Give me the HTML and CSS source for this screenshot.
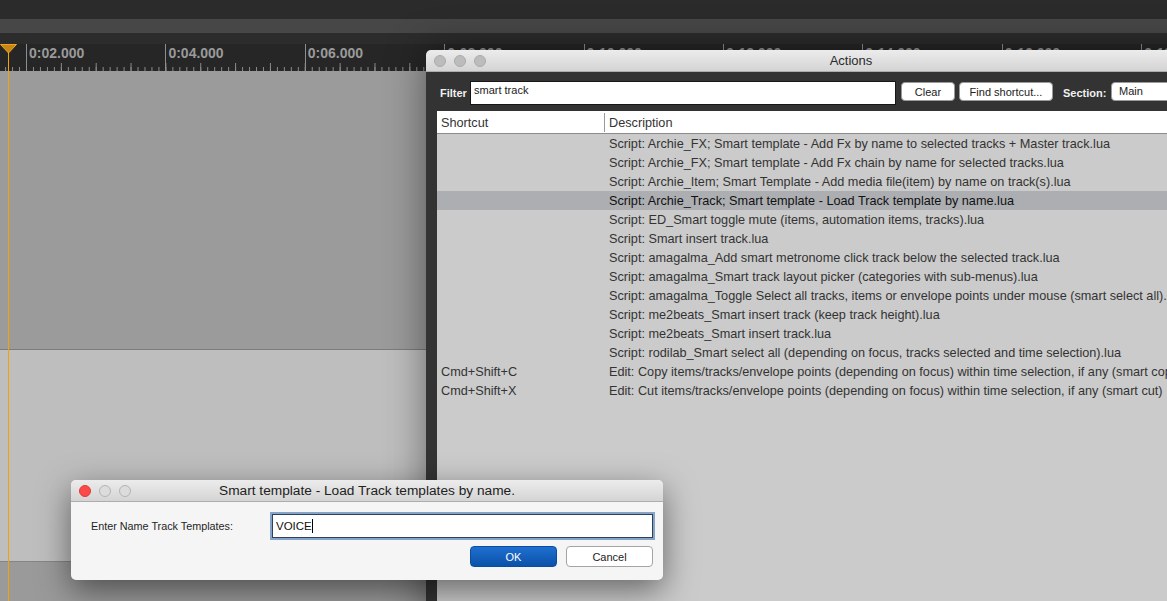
FILE: index.html
```html
<!DOCTYPE html>
<html lang="en">
<head>
<meta charset="UTF-8">
<title>Actions</title>
<link rel="stylesheet" href="styles.css">
</head>
<body>
<div class="app">
    <div class="menubar"></div>
    <div class="toolbar"></div>
    <div class="gap"></div>

    <div class="ruler">
        <div class="ruler-cell"><span>0:02.000</span></div>
        <div class="ruler-cell"><span>0:04.000</span></div>
        <div class="ruler-cell"><span>0:06.000</span></div>
        <div class="ruler-cell"><span>0:08.000</span></div>
        <div class="ruler-cell"><span>0:10.000</span></div>
        <div class="ruler-cell"><span>0:12.000</span></div>
        <div class="ruler-cell"><span>0:14.000</span></div>
        <div class="ruler-cell"><span>0:16.000</span></div>
        <div class="ruler-cell"><span>0:18.000</span></div>
    </div>

    <div class="track track-a"></div>
    <div class="track track-b"></div>
    <div class="track track-c"></div>

    <!-- playhead -->
    <div class="playhead">
        <svg width="17" height="10" viewBox="0 0 17 10">
            <polygon points="0.5,0.5 16.5,0.5 8.5,9" fill="#c6861a" stroke="#f2a41c" stroke-width="1"/>
        </svg>
        <div class="playhead-line"></div>
    </div>

    <!-- actions window -->
    <section class="win actions">
        <div class="titlebar">
            <div class="lights">
                <span class="light"></span><span class="light"></span><span class="light"></span>
            </div>
            <div class="title">Actions</div>
            <div></div>
        </div>
        <div class="actions-body">
            <div class="filter-row">
                <label class="filter-label">Filter</label>
                <div class="filter-input">smart track</div>
                <button class="btn btn-clear">Clear</button>
                <button class="btn btn-find">Find shortcut...</button>
                <span class="section-label">Section:</span>
                <div class="select">Main</div>
            </div>

            <div class="list">
                <div class="list-head">
                    <div class="col-short">Shortcut</div>
                    <div class="col-desc">Description</div>
                </div>
                <div class="row"><div class="col-short"></div><div class="col-desc">Script: Archie_FX; Smart template - Add Fx by name to selected tracks + Master track.lua</div></div>
                <div class="row"><div class="col-short"></div><div class="col-desc">Script: Archie_FX; Smart template - Add Fx chain by name for selected tracks.lua</div></div>
                <div class="row"><div class="col-short"></div><div class="col-desc">Script: Archie_Item; Smart Template - Add media file(item) by name on track(s).lua</div></div>
                <div class="row selected"><div class="col-short"></div><div class="col-desc">Script: Archie_Track; Smart template - Load Track template by name.lua</div></div>
                <div class="row"><div class="col-short"></div><div class="col-desc">Script: ED_Smart toggle mute (items, automation items, tracks).lua</div></div>
                <div class="row"><div class="col-short"></div><div class="col-desc">Script: Smart insert track.lua</div></div>
                <div class="row"><div class="col-short"></div><div class="col-desc">Script: amagalma_Add smart metronome click track below the selected track.lua</div></div>
                <div class="row"><div class="col-short"></div><div class="col-desc">Script: amagalma_Smart track layout picker (categories with sub-menus).lua</div></div>
                <div class="row"><div class="col-short"></div><div class="col-desc">Script: amagalma_Toggle Select all tracks, items or envelope points under mouse (smart select all).lua</div></div>
                <div class="row"><div class="col-short"></div><div class="col-desc">Script: me2beats_Smart insert track (keep track height).lua</div></div>
                <div class="row"><div class="col-short"></div><div class="col-desc">Script: me2beats_Smart insert track.lua</div></div>
                <div class="row"><div class="col-short"></div><div class="col-desc">Script: rodilab_Smart select all (depending on focus, tracks selected and time selection).lua</div></div>
                <div class="row"><div class="col-short">Cmd+Shift+C</div><div class="col-desc">Edit: Copy items/tracks/envelope points (depending on focus) within time selection, if any (smart copy)</div></div>
                <div class="row"><div class="col-short">Cmd+Shift+X</div><div class="col-desc">Edit: Cut items/tracks/envelope points (depending on focus) within time selection, if any (smart cut)</div></div>
            </div>
        </div>
    </section>

    <!-- input dialog -->
    <section class="win dialog">
        <div class="titlebar">
            <div class="lights">
                <span class="light light-red"></span><span class="light light-off"></span><span class="light light-off"></span>
            </div>
            <div class="title">Smart template - Load Track templates by name.</div>
            <div></div>
        </div>
        <div class="dialog-body">
            <div class="field-row">
                <label class="field-label">Enter Name Track Templates:</label>
                <div class="field-input">VOICE<span class="caret"></span></div>
            </div>
            <div class="button-row">
                <button class="dbtn dbtn-ok">OK</button>
                <button class="dbtn">Cancel</button>
            </div>
        </div>
    </section>
</div>
</body>
</html>
```

FILE: styles.css
```css
html, body {
    margin: 0;
    padding: 0;
}

body {
    font-family: "Liberation Sans", Arial, sans-serif;
    background: #9b9b9b;
}

.app {
    position: relative;
    width: 1167px;
    height: 601px;
    overflow: hidden;
    display: flex;
    flex-direction: column;
}

.menubar {
    height: 19px;
    background: #2b2b2b;
}

.toolbar {
    height: 14px;
    background: #474747;
}

.gap {
    height: 11px;
    background: #2c2c2c;
}

/* time ruler */
.ruler {
    height: 27px;
    flex-shrink: 0;
    display: flex;
    padding-left: 26px;
    background-color: #262626;
    background-image:
        repeating-linear-gradient(90deg, #8a8a8a 0 1px, transparent 1px 6.97px),
        repeating-linear-gradient(90deg, #8a8a8a 0 1px, transparent 1px 34.85px);
    background-size: 139.4px 4px, 139.4px 8px;
    background-position: 5.1px 100%, 26px 100%;
    background-repeat: repeat-x;
}

.ruler-cell {
    width: 139.4px;
    flex-shrink: 0;
    border-left: 1px solid #8e8e8e;
    box-sizing: border-box;
    padding: 2px 0 0 2px;
    color: #9a9a9a;
    font-size: 14px;
    font-weight: bold;
    line-height: 14px;
    white-space: nowrap;
    overflow: hidden;
}

.track {
    flex-shrink: 0;
}

.track-a {
    height: 278px;
    background: #9b9b9b;
    border-bottom: 1px solid #7c7c7c;
}

.track-b {
    height: 211px;
    background: #bebebe;
    border-bottom: 1px solid #858585;
}

.track-c {
    flex: 1;
    background: #9a9a9a;
}

.playhead {
    position: absolute;
    left: 0;
    top: 44px;
    width: 17px;
    bottom: 0;
}

.playhead svg {
    display: block;
}

.playhead-line {
    position: absolute;
    left: 8px;
    top: 8px;
    bottom: 0;
    width: 1px;
    background: #f5a300;
}

/* windows */
.win {
    position: absolute;
    display: flex;
    flex-direction: column;
    border-radius: 5px;
}

.titlebar {
    height: 21px;
    flex-shrink: 0;
    display: grid;
    grid-template-columns: 1fr auto 1fr;
    align-items: center;
    background: linear-gradient(#ececec, #d4d4d4);
    border-bottom: 1px solid #adadad;
    border-radius: 5px 5px 0 0;
}

.lights {
    display: flex;
    gap: 8px;
    padding-left: 8px;
}

.light {
    width: 12px;
    height: 12px;
    border-radius: 50%;
    box-sizing: border-box;
    background: #bcbcbc;
    border: 1px solid #ababab;
}

.light-red {
    background: #fc4a48;
    border-color: #df3b39;
}

.light-off {
    background: #dcdcdc;
    border-color: #b4b4b4;
}

.title {
    font-size: 13px;
    color: #2a2a2a;
    white-space: nowrap;
}

/* actions window */
.actions {
    left: 426px;
    top: 50px;
    width: 850px;
    height: 570px;
    background: #333333;
    box-shadow: 0 0 40px rgba(0, 0, 0, 0.45);
}

.actions-body {
    flex: 1;
    display: flex;
    flex-direction: column;
    padding: 9px 0 0 11px;
}

.filter-row {
    display: flex;
    align-items: flex-start;
    height: 24px;
    font-size: 11px;
}

.filter-label {
    color: #f0f0f0;
    font-weight: bold;
    padding: 6px 0 0 3px;
    width: 30px;
}

.filter-input {
    width: 426px;
    height: 24px;
    box-sizing: border-box;
    background: #fff;
    border: 1px solid #161616;
    padding: 2px 0 0 3px;
    color: #222;
}

.btn {
    height: 19px;
    margin-top: 1px;
    border: 1px solid #9a9a9a;
    border-radius: 4px;
    background: #fff;
    font-family: inherit;
    font-size: 11px;
    color: #222;
    padding: 0;
}

.btn-clear {
    width: 54px;
    margin-left: 5px;
}

.btn-find {
    width: 94px;
    margin-left: 4px;
}

.section-label {
    color: #f0f0f0;
    font-weight: bold;
    margin-left: 10px;
    padding-top: 6px;
    width: 48px;
}

.select {
    width: 120px;
    height: 19px;
    margin-top: 1px;
    box-sizing: border-box;
    background: #fff;
    border: 1px solid #9a9a9a;
    border-radius: 4px;
    padding: 2px 0 0 7px;
    color: #222;
}

.list {
    flex: 1;
    margin-top: 6px;
    background: #cbcbcb;
    font-size: 12.7px;
    color: #333;
}

.list-head {
    display: flex;
    height: 22px;
    background: #fff;
    border-bottom: 1px solid #8c8c8c;
    align-items: center;
}

.list-head .col-short {
    height: 19px;
    line-height: 20px;
    border-right: 1px solid #9a9a9a;
}

.list-head .col-desc {
    padding-top: 1px;
}

.col-short {
    width: 168px;
    flex-shrink: 0;
    box-sizing: border-box;
    padding-left: 4px;
}

.col-desc {
    padding-left: 4px;
    white-space: nowrap;
}

.row {
    display: flex;
    height: 19px;
    line-height: 20px;
}

.row.selected {
    background: #acaeb2;
    color: #111;
}

/* input dialog */
.dialog {
    left: 71px;
    top: 480px;
    width: 592px;
    height: 100px;
    background: #f5f5f5;
    box-shadow: 0 10px 32px rgba(0, 0, 0, 0.5);
}

.dialog .title {
    color: #222;
    font-size: 13.7px;
}

.dialog-body {
    display: flex;
    flex-direction: column;
    gap: 8px;
    padding: 12px 10px 0 20px;
}

.field-row {
    display: flex;
    align-items: center;
}

.field-label {
    width: 181px;
    font-size: 10.8px;
    color: #1e1e1e;
}

.field-input {
    flex: 1;
    height: 24px;
    box-sizing: border-box;
    background: #fff;
    border: 1px solid #2f405a;
    box-shadow: 0 0 0 2px #86a4c8;
    padding: 4px 0 0 3px;
    font-size: 11.5px;
    color: #111;
}

.caret {
    display: inline-block;
    width: 1px;
    height: 14px;
    background: #000;
    vertical-align: -3px;
}

.button-row {
    display: flex;
    justify-content: flex-end;
    gap: 9px;
}

.dbtn {
    width: 87px;
    height: 21px;
    border: 1px solid #a4a4a4;
    border-radius: 4px;
    background: #fff;
    font-family: inherit;
    font-size: 11px;
    color: #222;
    padding: 0;
}

.dbtn-ok {
    border-color: #0b4d9c;
    background: linear-gradient(#1f6fd1, #0b52a8);
    color: #fff;
}
```
